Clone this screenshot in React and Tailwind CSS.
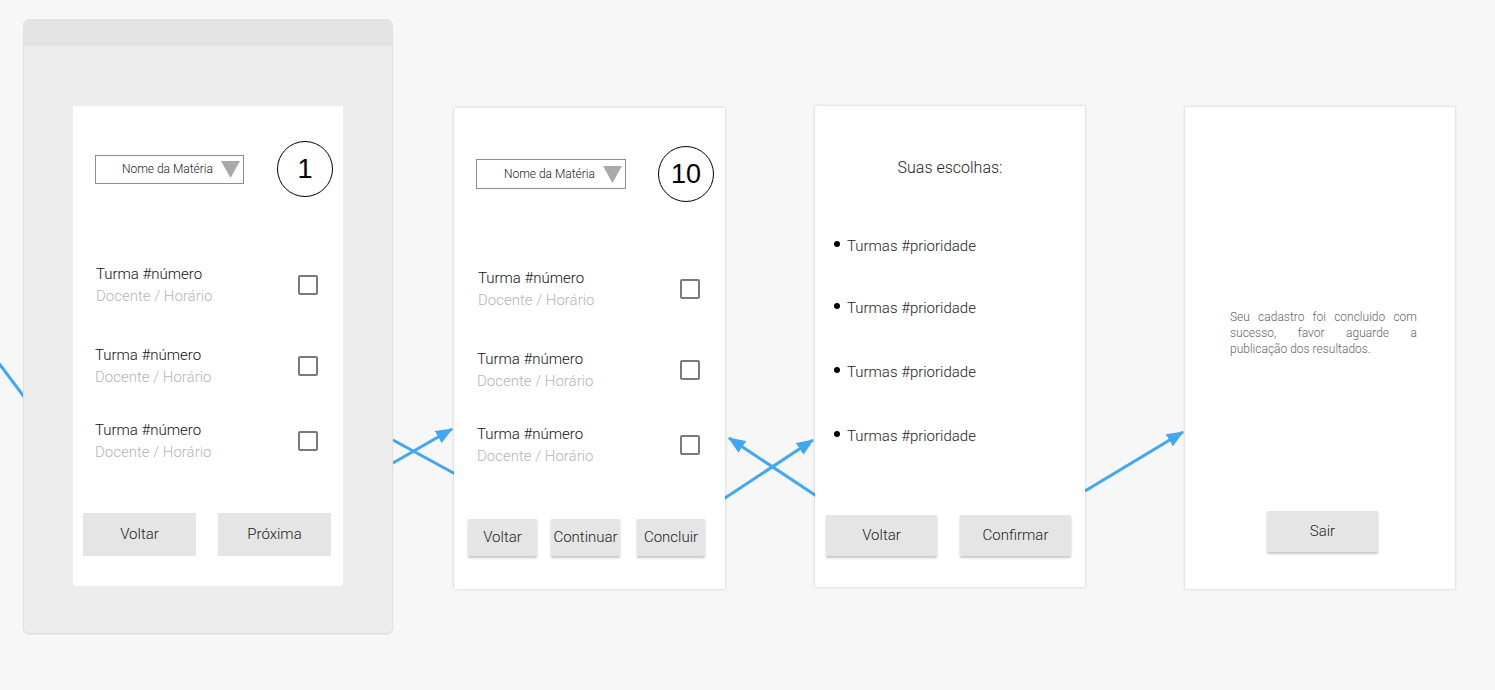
const font = { fontFamily: 'Roboto, "Liberation Sans", sans-serif' };

function Dropdown({ className = '' }) {
  return (
    <div className={`flex items-center justify-end gap-2 border border-[#8c8c8c] bg-white pr-[3px] ${className}`}>
      <span className="text-[12px] font-light text-[#222]">Nome da Matéria</span>
      <svg width="19" height="17" viewBox="0 0 19 17">
        <path d="M0 0 H19 L9.5 17 Z" fill="#a9a9a9" />
      </svg>
    </div>
  );
}

function Badge({ n, className = '' }) {
  return (
    <div
      className={`grid size-14 place-items-center rounded-full border-[1.5px] border-black text-[27px] text-black ${className}`}
      style={{ fontFamily: '"Liberation Sans", Arial, sans-serif' }}
    >
      {n}
    </div>
  );
}

function Checkbox() {
  return <div className="size-5 rounded-[2px] border-2 border-[#7a7a7a]" />;
}

function Row({ className, checkClass }) {
  return (
    <div className={`flex items-start justify-between ${className}`}>
      <div className="flex flex-col">
        <span className="h-5 text-[15px] font-light leading-5 text-[#111]">Turma #número</span>
        <span className="mt-[2px] h-5 text-[15px] font-light leading-5 text-[#b5b5b5]">Docente / Horário</span>
      </div>
      <div className={checkClass}>
        <Checkbox />
      </div>
    </div>
  );
}

function Arrows() {
  return (
    <svg className="absolute inset-0" width="1495" height="690">
      <defs>
        <marker id="head" markerUnits="userSpaceOnUse" markerWidth="17" markerHeight="14" refX="16" refY="7" orient="auto">
          <path d="M0 0 L17 7 L0 14 Z" fill="#3fa7f4" />
        </marker>
      </defs>
      <g stroke="#3fa7f4" strokeWidth="3" fill="none">
        <line x1="-2" y1="362" x2="40" y2="418" />
        <line x1="393" y1="463" x2="452" y2="429" markerEnd="url(#head)" />
        <line x1="393" y1="440" x2="470" y2="482" />
        <line x1="722" y1="500" x2="813" y2="440" markerEnd="url(#head)" />
        <line x1="830" y1="505" x2="729" y2="438" markerEnd="url(#head)" />
        <line x1="1085" y1="491" x2="1183" y2="432" markerEnd="url(#head)" />
      </g>
    </svg>
  );
}

const btn = 'bg-[#e5e5e5] text-[15px] font-light text-[#222]';
const lift = 'shadow-[0_2px_2px_rgba(0,0,0,0.22)]';

export default function App() {
  return (
    <div className="relative h-[690px] w-[1495px] overflow-hidden bg-[#f7f7f7]" style={font}>
      <Arrows />

      {/* frame with screen 1 */}
      <div className="absolute left-[23px] top-[19px] flex h-[615px] w-[370px] flex-col overflow-hidden rounded-md border border-[#e0e0e0] bg-[#ededed] shadow-[0_1px_1px_rgba(0,0,0,0.06)]">
        <div className="h-[26px] shrink-0 bg-[#e3e3e3]" />
        <div className="ml-[49px] mt-[60px] flex h-[480px] w-[270px] flex-col bg-white">
          <div className="mt-[35px] flex h-14 items-center">
            <Dropdown className="ml-[22px] h-[29px] w-[149px]" />
            <Badge n="1" className="ml-[33px]" />
          </div>
          <Row className="ml-[23px] mr-[25px] mt-[67px]" checkClass="mt-[11px]" />
          <Row className="ml-[22px] mr-[25px] mt-[39px]" checkClass="mt-[11px]" />
          <Row className="ml-[22px] mr-[25px] mt-[33px]" checkClass="mt-[11px]" />
          <div className="ml-[10px] mt-[51px] flex gap-[22px]">
            <button className={`h-[43px] w-[113px] ${btn}`}>Voltar</button>
            <button className={`h-[43px] w-[113px] ${btn}`}>Próxima</button>
          </div>
        </div>
      </div>

      {/* screen 2 */}
      <div className="absolute left-[454px] top-[108px] flex h-[481px] w-[271px] flex-col bg-white shadow-[0_0_3px_rgba(0,0,0,0.18)]">
        <div className="mt-[38px] flex h-14 items-center">
          <Dropdown className="ml-[22px] h-[30px] w-[150px]" />
          <Badge n="10" className="ml-[32px]" />
        </div>
        <Row className="ml-[24px] mr-[25px] mt-[66px]" checkClass="mt-[11px]" />
        <Row className="ml-[23px] mr-[25px] mt-[39px]" checkClass="mt-[11px]" />
        <Row className="ml-[23px] mr-[25px] mt-[33px]" checkClass="mt-[11px]" />
        <div className="ml-[14px] mt-[53px] flex">
          <button className={`h-[37px] w-[69px] ${btn} ${lift}`}>Voltar</button>
          <button className={`ml-[14px] h-[37px] w-[69px] ${btn} ${lift}`}>Continuar</button>
          <button className={`ml-[17px] h-[37px] w-[68px] ${btn} ${lift}`}>Concluir</button>
        </div>
      </div>

      {/* screen 3 */}
      <div className="absolute left-[815px] top-[106px] flex h-[481px] w-[270px] flex-col bg-white shadow-[0_0_3px_rgba(0,0,0,0.18)]">
        <p className="mt-[51px] h-[22px] text-center text-base font-light leading-[22px] text-[#222]">Suas escolhas:</p>
        <ul className="ml-[19px] mt-[57px] flex flex-col">
          {['mt-0', 'mt-[42px]', 'mt-[44px]', 'mt-[44px]'].map((m, i) => (
            <li key={i} className={`flex h-5 items-center gap-[7px] text-[15px] font-light leading-5 text-[#222] ${m}`}>
              <span className="size-[6px] -translate-y-[2px] rounded-full bg-black" />
              Turmas #prioridade
            </li>
          ))}
        </ul>
        <div className="ml-[11px] mt-[69px] flex gap-[23px]">
          <button className={`h-[41px] w-[111px] ${btn} ${lift}`}>Voltar</button>
          <button className={`h-[41px] w-[111px] ${btn} ${lift}`}>Confirmar</button>
        </div>
      </div>

      {/* screen 4 */}
      <div className="absolute left-[1185px] top-[107px] flex h-[482px] w-[270px] flex-col bg-white shadow-[0_0_3px_rgba(0,0,0,0.18)]">
        <p className="ml-[45px] mt-[202px] w-[187px] text-justify text-xs font-light leading-4 text-[#666]">
          Seu cadastro foi concluido com sucesso, favor aguarde a publicação dos resultados.
        </p>
        <button className={`ml-[82px] mt-[154px] h-[41px] w-[111px] ${btn} ${lift}`}>Sair</button>
      </div>
    </div>
  );
}
